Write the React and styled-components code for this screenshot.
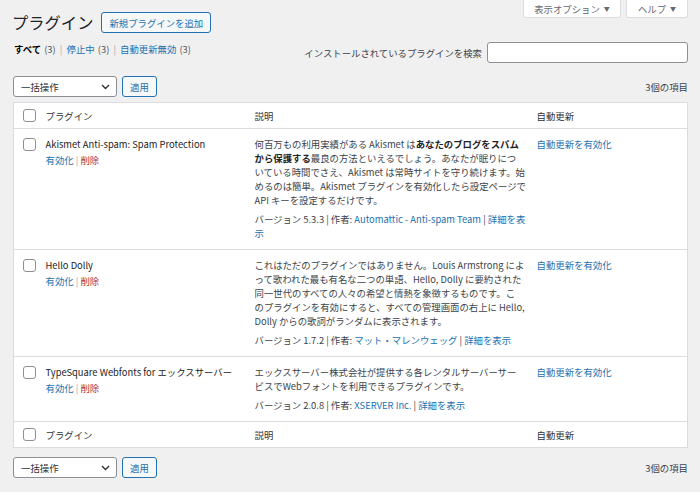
import React from 'react';
import styled, { createGlobalStyle } from 'styled-components';

const GlobalStyle = createGlobalStyle`
html, body {
  margin: 0;
  padding: 0;
}
body {
  background: #f0f0f1;
  color: #3c434a;
  font-family: "Noto Sans CJK JP", "Noto Sans", sans-serif;
  font-size: 9.4px;
  line-height: 14px;
}
a {
  color: #2271b1;
  text-decoration: none;
}
`

// description text, one entry per visual line (as wrapped in the admin screen)
const plugins = [
  {
    name: 'Akismet Anti-spam: Spam Protection',
    desc: [
      <>何百万もの利用実績がある Akismet は<b>あなたのブログをスパム</b></>,
      <><b>から保護する</b>最良の方法といえるでしょう。あなたが眠りにつ</>,
      'いている時間でさえ、Akismet は常時サイトを守り続けます。始',
      'めるのは簡単。Akismet プラグインを有効化したら設定ページで',
      'API キーを設定するだけです。',
    ],
    version: '5.3.3',
    author: 'Automattic - Anti-spam Team',
  },
  {
    name: 'Hello Dolly',
    desc: [
      'これはただのプラグインではありません。Louis Armstrong によ',
      'って歌われた最も有名な二つの単語、Hello, Dolly に要約された',
      '同一世代のすべての人々の希望と情熱を象徴するものです。こ',
      'のプラグインを有効にすると、すべての管理画面の右上に Hello,',
      'Dolly からの歌詞がランダムに表示されます。',
    ],
    version: '1.7.2',
    author: 'マット・マレンウェッグ',
  },
  {
    name: 'TypeSquare Webfonts for エックスサーバー',
    desc: [
      'エックスサーバー株式会社が提供する各レンタルサーバーサー',
      'ビスでWebフォントを利用できるプラグインです。',
    ],
    version: '2.0.8',
    author: 'XSERVER Inc.',
  },
];

const Chevron = () => (
  <svg width="9" height="6" viewBox="0 0 9 6">
    <polyline points="1,1 4.5,4.5 8,1" fill="none" stroke="#2c3338" strokeWidth="1.4" />
  </svg>
);

const BulkBar = ({ top }) => (
  <TableNav top={top}>
    <Actions>
      <SelectBox>
        <span>一括操作</span>
        <Chevron />
      </SelectBox>
      <Button>適用</Button>
    </Actions>
    <Count>3個の項目</Count>
  </TableNav>
);

const HeadRow = ({ foot }) => (
  <tr>
    <HeadCheck foot={foot}><Checkbox /></HeadCheck>
    <Head foot={foot}>プラグイン</Head>
    <Head foot={foot}>説明</Head>
    <Head foot={foot}>自動更新</Head>
  </tr>
);

const App = () => {
  return (
    <Page>
      <GlobalStyle />
      <TopBar>
        <TitleRow>
          <Title>プラグイン</Title>
          <Button>新規プラグインを追加</Button>
        </TitleRow>
        <ScreenTabs>
          <Tab width={98}>表示オプション <Arrow>▼</Arrow></Tab>
          <Tab width={62}>ヘルプ <Arrow>▼</Arrow></Tab>
        </ScreenTabs>
      </TopBar>

      <SubBar>
        <Filters>
          <Current>すべて</Current> <Num>(3)</Num> <Sep>|</Sep> <a href="#">停止中</a> <Num>(3)</Num> <Sep>|</Sep> <a href="#">自動更新無効</a> <Num>(3)</Num>
        </Filters>
        <SearchBox>
          <label>インストールされているプラグインを検索</label>
          <Input />
        </SearchBox>
      </SubBar>

      <BulkBar top={13} />

      <Table>
        <colgroup>
          <col style={{ width: 25 }} />
          <col style={{ width: 209 }} />
          <col style={{ width: 282 }} />
          <col />
        </colgroup>
        <thead>
          <HeadRow />
        </thead>
        <tbody>
          {plugins.map((p) => (
            <Row key={p.name}>
              <CheckCell><Checkbox /></CheckCell>
              <Cell>
                <PluginTitle>{p.name}</PluginTitle>
                <RowActions>
                  <a href="#">有効化</a> | <Delete href="#">削除</Delete>
                </RowActions>
              </Cell>
              <DescCell>
                <Para>
                  {p.desc.map((line, i) => (
                    <Line key={i}>{line}</Line>
                  ))}
                </Para>
                <Para>
                  バージョン {p.version} | 作者: <a href="#">{p.author}</a> | <a href="#">詳細を表示</a>
                </Para>
              </DescCell>
              <Cell>
                <a href="#">自動更新を有効化</a>
              </Cell>
            </Row>
          ))}
        </tbody>
        <tfoot>
          <HeadRow foot />
        </tfoot>
      </Table>

      <BulkBar top={9} />
    </Page>
  );
};

export default App;

const Page = styled.div`
padding: 0 12px 0 13px;
`
const TopBar = styled.div`
display: flex;
justify-content: space-between;
align-items: flex-start;
`
const TitleRow = styled.div`
display: flex;
align-items: center;
gap: 8px;
padding-top: 12px;
`
const Title = styled.h1`
margin: 0 0 0 -1px;
font-size: 16.3px;
font-weight: 400;
line-height: 21px;
color: #1d2327;
`
const Button = styled.button`
height: 21px;
box-sizing: border-box;
padding: 0 7px;
border: 1px solid #2271b1;
border-radius: 3px;
background: #f6f7f7;
color: #2271b1;
font: inherit;
cursor: pointer;
`
const ScreenTabs = styled.div`
display: flex;
gap: 5px;
`
const Tab = styled.div`
width: ${(p) => p.width}px;
height: 18px;
box-sizing: border-box;
display: flex;
justify-content: center;
align-items: center;
gap: 4px;
background: #fff;
border: 1px solid #dcdcde;
border-top: 0;
border-radius: 0 0 3px 3px;
color: #646970;
`
const Arrow = styled.span`
font-size: 6px;
`
const SubBar = styled.div`
display: flex;
justify-content: space-between;
align-items: flex-start;
margin-top: 9px;
`
const Filters = styled.div`
padding-left: 1px;
color: #50575e;
word-spacing: 1px;
`
const Current = styled.span`
font-weight: 700;
color: #000;
`
const Num = styled.span`
color: #50575e;
`
const Sep = styled.span`
padding: 0 1px;
color: #a7aaad;
`
const SearchBox = styled.div`
display: flex;
align-items: center;
gap: 5px;
`
const Input = styled.input`
width: 201px;
height: 21px;
box-sizing: border-box;
border: 1px solid #8c8f94;
border-radius: 3px;
background: #fff;
`
const TableNav = styled.div`
display: flex;
justify-content: space-between;
align-items: center;
margin-top: ${(p) => p.top}px;
`
const Actions = styled.div`
display: flex;
gap: 5px;
`
const SelectBox = styled.div`
width: 104px;
height: 21px;
box-sizing: border-box;
padding: 0 6px 0 7px;
display: flex;
justify-content: space-between;
align-items: center;
border: 1px solid #8c8f94;
border-radius: 3px;
background: #fff;
color: #2c3338;
`
const Count = styled.div`
color: #3c434a;
`
const Table = styled.table`
width: 100%;
margin-top: 5px;
border: 1px solid #dcdcde;
border-collapse: collapse;
border-spacing: 0;
table-layout: fixed;
background: #fff;
`
const Head = styled.th`
height: 25px;
padding: 0 7px;
text-align: left;
font-weight: 400;
color: #2c3338;
vertical-align: middle;
border-bottom: ${(p) => (p.foot ? '0' : '1px solid #dcdcde')};
border-top: ${(p) => (p.foot ? '1px solid #dcdcde' : '0')};
`
const HeadCheck = styled(Head)`
padding: 0 0 0 9px;
`
const Checkbox = styled.span`
display: block;
width: 13px;
height: 13px;
box-sizing: border-box;
border: 1px solid #8c8f94;
border-radius: 3px;
background: #fff;
`
const Row = styled.tr`
& + & td {
  border-top: 1px solid #dcdcde;
}
`
const Cell = styled.td`
padding: 8px 7px 9px;
vertical-align: top;
`
const CheckCell = styled(Cell)`
padding: 9px 0 0 9px;
`
const DescCell = styled(Cell)`
padding-right: 4px;
`
const PluginTitle = styled.div`
color: #1d2327;
white-space: nowrap;
margin-bottom: 2px;
`
const RowActions = styled.div`
color: #a7aaad;
`
const Delete = styled.a`
color: #b32d2e;
`
const Para = styled.p`
margin: 0 0 5px;
&:last-child {
  margin-bottom: 0;
}
b {
  color: #1d2327;
}
`
const Line = styled.span`
display: block;
white-space: nowrap;
`
